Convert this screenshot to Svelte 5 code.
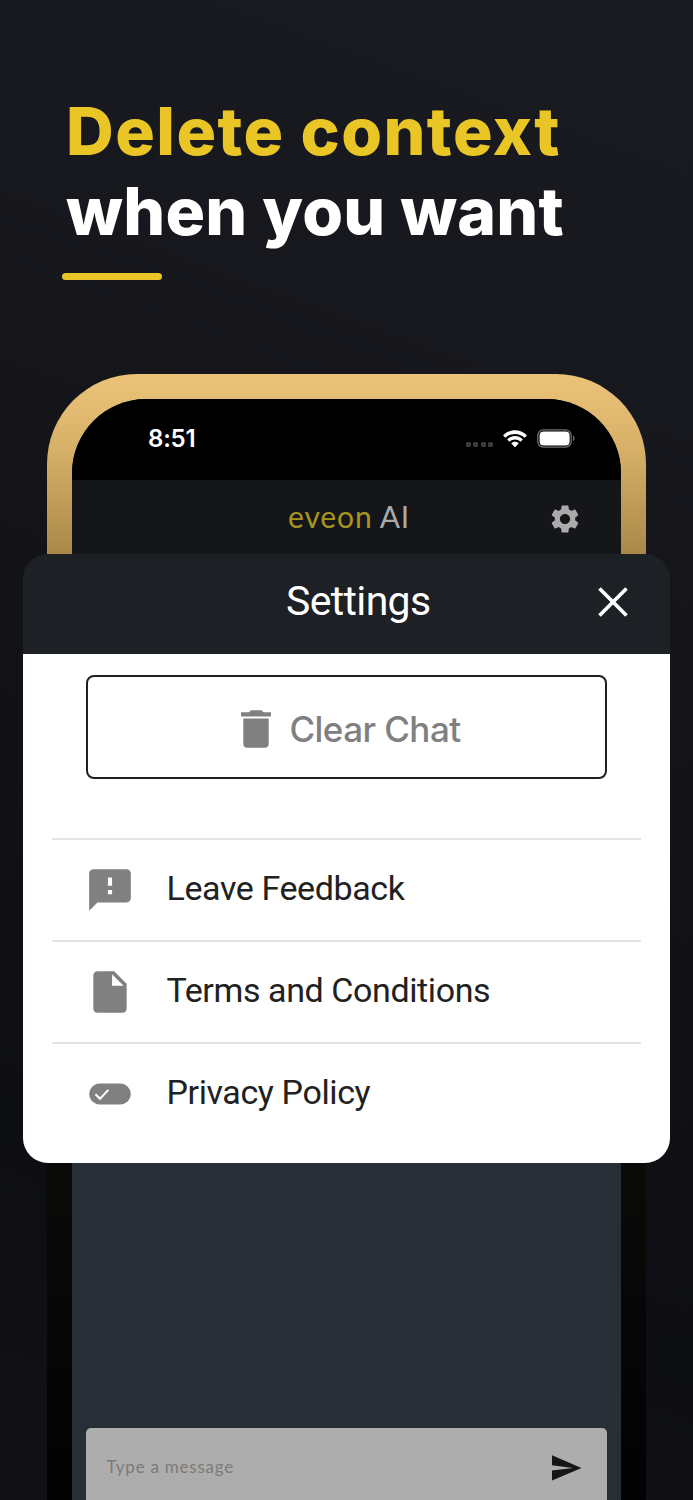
<script>
  const rows = [
    { icon: 'M20 2H4c-1.1 0-2 .9-2 2v18l4-4h14c1.1 0 2-.9 2-2V4c0-1.1-.9-2-2-2zm-7 12h-2v-2h2v2zm0-4h-2V6h2v4z', label: 'Leave Feedback' },
    { icon: 'M6 2c-1.1 0-2 .9-2 2v16c0 1.100.9 2 2 2h12c1.100 0 2-.9 2-2V8l-6-6H6zm7 7V3.500L18.500 9H13z', label: 'Terms and Conditions' },
    { icon: 'M17 7H7a5 5 0 0 0 0 10h10a5 5 0 0 0 0-10z', label: 'Privacy Policy', check: true }
  ];
</script>

<main class="page">
  <header class="headline">
    <h1><span class="gold">Delete context</span><span class="white">when you want</span></h1>
    <div class="rule"></div>
  </header>

  <section class="phone">
    <div class="screen">
      <div class="status">
        <span class="time">8:51</span>
        <div class="signals">
          <span class="dots"><i></i><i></i><i></i><i></i></span>
          <svg class="wifi" viewBox="0 0 24 18" width="24" height="18" fill="#fff">
            <path d="M12 0.300C7.500 0.300 3.400 2.100 0.400 5c-.2.2-.2.5 0 .7l1.700 1.700c.2.2.5.2.7 0C5.300 5.200 8.500 3.900 12 3.900s6.700 1.300 9.200 3.500c.2.2.5.2.7 0l1.700-1.700c.2-.2.2-.5 0-.7C20.600 2.100 16.500.3 12 .3z" />
            <path d="M12 6.100c-2.900 0-5.500 1.100-7.500 3-.2.2-.2.5 0 .7l1.700 1.700c.2.2.5.2.7 0 1.400-1.200 3.200-1.900 5.100-1.900s3.700.7 5.100 1.900c.2.2.5.2.7 0l1.700-1.700c.2-.2.2-.5 0-.7-2-1.900-4.600-3-7.500-3z" />
            <path d="M12 11.800c-1.300 0-2.500.5-3.400 1.200-.2.2-.2.500 0 .7l3 3.300c.2.200.6.200.8 0l3-3.300c.2-.2.2-.5 0-.7-.9-.7-2.100-1.200-3.400-1.200z" />
          </svg>
          <svg class="battery" viewBox="0 0 38 19" width="38" height="19">
            <rect x="0.800" y="0.800" width="33.400" height="17.400" rx="5.600" fill="none" stroke="#707070" stroke-width="1.300" />
            <rect x="2.600" y="2.600" width="30" height="13.800" rx="4" fill="#fff" />
            <path d="M36 6.600v5.600c2-.7 2-4.900 0-5.600z" fill="#707070" />
          </svg>
        </div>
      </div>
      <div class="appbar">
        <span class="brand"><b>eveon</b> AI</span>
        <svg class="gear" viewBox="0 0 24 24" width="34" height="34" fill="#aaa">
          <path d="M19.140 12.940c.04-.3.060-.61.060-.94 0-.32-.02-.64-.07-.94l2.030-1.580c.18-.14.230-.41.120-.61l-1.920-3.320c-.12-.22-.37-.29-.59-.22l-2.390.96c-.5-.38-1.030-.7-1.620-.94L14.400 2.810c-.04-.24-.24-.41-.48-.41h-3.840c-.24 0-.43.17-.47.41L9.250 5.350c-.59.24-1.130.57-1.620.94l-2.390-.96c-.22-.08-.47 0-.59.22L2.740 8.870c-.12.21-.08.470.12.610l2.030 1.580c-.05.3-.09.63-.09.94s.02.640.07.940l-2.030 1.580c-.18.14-.23.410-.12.610l1.920 3.320c.12.220.37.290.59.220l2.390-.96c.5.380 1.030.7 1.620.940l.36 2.540c.05.240.24.410.48.410h3.840c.24 0 .44-.17.470-.41l.36-2.540c.59-.24 1.130-.56 1.620-.94l2.390.96c.22.080.47 0 .59-.22l1.920-3.320c.12-.22.070-.47-.12-.61l-2.010-1.580zM12 15.600c-1.980 0-3.600-1.620-3.600-3.600s1.620-3.600 3.600-3.600 3.600 1.620 3.600 3.600-1.620 3.600-3.600 3.600z" />
        </svg>
      </div>
      <div class="chat"></div>
      <div class="composer">
        <span>Type a message</span>
        <svg viewBox="0 0 30 26" width="30" height="26" fill="#161616"><path d="M0 .3 29.500 13 0 25.600V15.600L21 13 0 10.300z" /></svg>
      </div>
    </div>
  </section>

  <section class="modal">
    <div class="modal-head">
      <h2>Settings</h2>
      <svg class="close" viewBox="0 0 30 30" width="30" height="30"><path d="M1.500 1.500l27 27M28.500 1.500l-27 27" stroke="#fff" stroke-width="3.700" /></svg>
    </div>
    <div class="modal-body">
      <button>
        <svg viewBox="0 0 30 38" width="30" height="38" fill="#808080">
          <path d="M0 2.300h8L10 .3h10.500l2 2H30v4.200H0zM2.300 8.500h25.400v25.300a4 4 0 0 1-4 4H6.300a4 4 0 0 1-4-4z" />
        </svg>
        <span>Clear Chat</span>
      </button>
      <div class="list">
        {#each rows as row}
          <div class="row">
            <svg viewBox="0 0 24 24" width="50" height="50" fill="#808080">
              <path fill-rule="evenodd" d={row.icon} />
              {#if row.check}
                <path d="M5 12.100l2.200 2.200 4-4.300" fill="none" stroke="#fff" stroke-width="0.950" />
              {/if}
            </svg>
            <span>{row.label}</span>
          </div>
        {/each}
      </div>
    </div>
  </section>
</main>

<style>
  :global(body) { background: #111217; }
  * { box-sizing: border-box; }
  .page {
    position: relative; width: 693px; height: 1500px; overflow: hidden;
    display: flex; flex-direction: column;
    background: linear-gradient(200deg, #1a1b20 0%, #17181d 25%, #121217 50%, #0d0e12 78%, #111116 100%);
  }
  .headline { height: 373.5px; flex: none; padding: 92px 0 0 62px; }
  h1 {
    margin: 0; padding-left: 4px; display: flex; flex-direction: column;
    font: 800 66px/79.500px Inter, sans-serif; white-space: nowrap;
  }
  .gold { color: #eac526; letter-spacing: 1.450px; }
  .white { color: #fff; letter-spacing: 0.270px; }
  .rule { width: 100px; height: 7px; margin-top: 22px; border-radius: 4px; background: #eac526; }
  .phone {
    flex: none; width: 599px; height: 1200px; margin-left: 47px; padding: 25px;
    border-radius: 90px 90px 0 0;
    background: linear-gradient(#ebc278 0, #d9b26a 70px, #a98848 180px, #0c0c0b 700px, #090908 840px, #020203 1126px);
  }
  .screen {
    height: 1150px; overflow: hidden; border-radius: 74px 74px 0 0;
    display: flex; flex-direction: column; background: #272e36;
  }
  .status {
    height: 81.5px; flex: none; background: #000; padding: 0 46px 1px 76px;
    display: flex; justify-content: space-between; align-items: center;
  }
  .time { color: #fff; font: 600 24px/30px Inter, sans-serif; letter-spacing: -0.200px; padding-top: 1px; }
  .signals { display: flex; align-items: center; }
  .dots { display: flex; gap: 2.500px; margin: 12px 10px 0 0; }
  .dots i { width: 5px; height: 5px; border-radius: 1.500px; background: #3b3b3b; }
  .wifi { margin-right: 10px; }
  .appbar {
    height: 78px; flex: none; background: #15161a; padding: 0 39px 0 216px;
    display: flex; justify-content: space-between; align-items: center;
  }
  .brand { color: #aaa; font: 400 30px/36px Lato, sans-serif; letter-spacing: 0.500px; padding-bottom: 6px; white-space: nowrap; }
  .brand b { font-weight: 400; color: #a8951c; letter-spacing: 0.900px; }
  .chat { height: 870px; flex: none; }
  .composer {
    flex: none; height: 110px; width: 521.500px; margin: 0 0 0 13.500px; padding: 27px 25px 0 21px;
    border-radius: 5px; background: #adadad;
    display: flex; justify-content: space-between; align-items: flex-start;
  }
  .composer span { color: #7b7b7b; font: 400 17px/24px Lato, sans-serif; letter-spacing: 0.760px; }
  .modal {
    position: absolute; left: 23px; top: 553.5px; width: 647px; height: 609.5px;
    border-radius: 25px; overflow: hidden;
    background: linear-gradient(#1d2024 100px, #fff 100px);
  }
  .modal-head {
    height: 100.5px; background: #1d2024; padding: 0 42px 3px 263px;
    display: flex; justify-content: space-between; align-items: center;
  }
  h2 { margin: 0; padding-bottom: 2px; color: #fff; font: 400 41px/50px Roboto, sans-serif; letter-spacing: -0.650px; }
  .modal-body { padding: 21px 29px 0; display: flex; flex-direction: column; }
  button {
    height: 104px; width: 521px; margin: 0 0 0 33.500px; padding: 4px 0 0 10px;
    border: 2px solid #1d2024; border-radius: 8px; background: #fff;
    display: flex; align-items: center; justify-content: center; gap: 18px;
    color: #808080; font: 450 35px/44px Inter, sans-serif; letter-spacing: -0.550px;
  }
  .list { margin-top: 58.500px; }
  .row {
    height: 102px; border-top: 2px solid #e4e4e4; padding-left: 33px;
    display: flex; align-items: center; gap: 31.500px;
    color: #212121; font: 400 34px/44px Roboto, sans-serif; letter-spacing: -0.400px;
  }
  .row span { padding-bottom: 3px; }
</style>
